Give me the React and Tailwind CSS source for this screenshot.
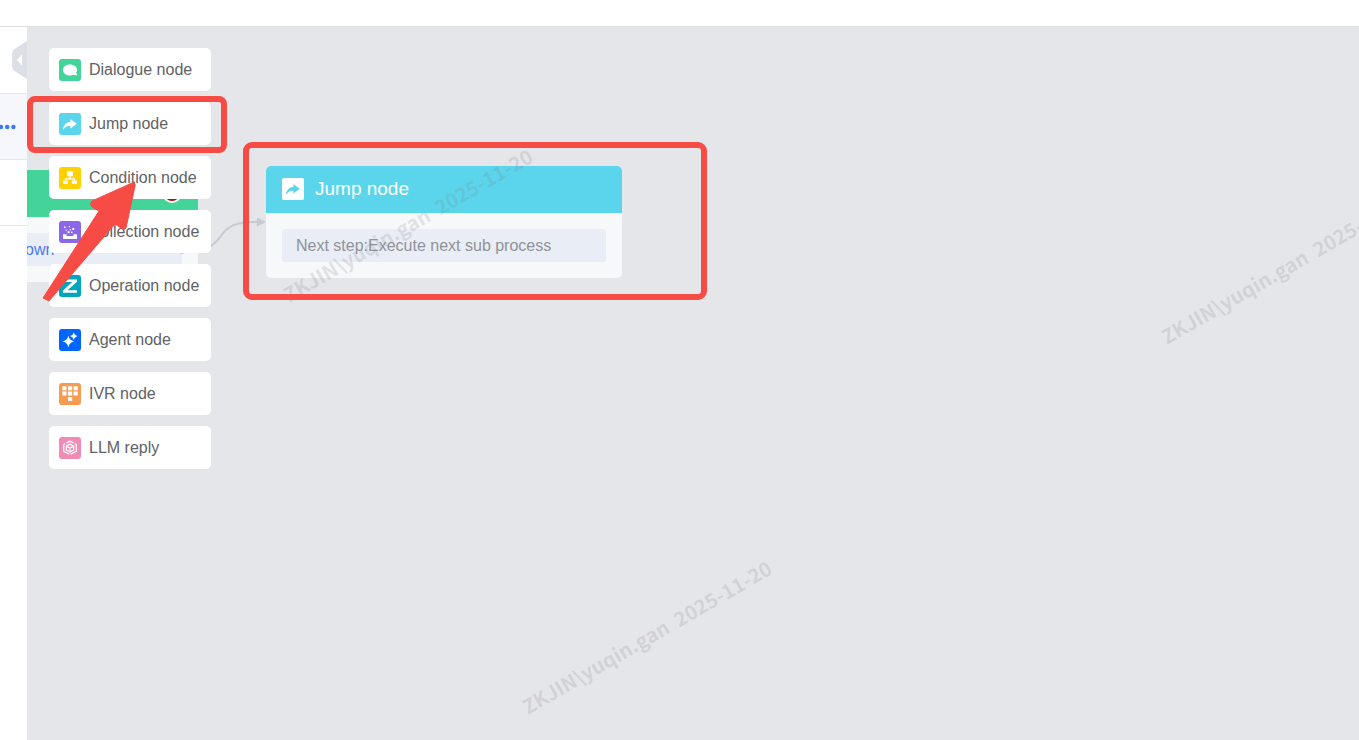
import React from "react";

const glyphs = {
  dialogue: (
    <path d="M11 5.5c4 0 7 2.300 7 5.400 0 1.200-.3 2-.8 2.800l1 2.700-3.400-.6c-1.100.4-2.400.6-3.800.6-4 0-7-2.300-7-5.500s3-5.400 7-5.400Z" />
  ),
  jump: (
    <path d="M11.400 6 17.800 10.700 11.400 15.400V12.700C8.400 12.600 6 13.800 4 16.700 4.400 12.200 7.200 9.200 11.400 8.800Z" />
  ),
  condition: (
    <>
      <rect x="8" y="4.300" width="6" height="5" rx="0.600" />
      <path d="M10.400 9h1.300v2.300h4.400v3h-1.300v-1.800H7.200v1.800H5.900v-3h4.500Z" />
      <rect x="4" y="13.600" width="5" height="3.200" />
      <rect x="12.800" y="13.600" width="5.200" height="3.200" />
    </>
  ),
  collection: (
    <>
      <path d="M4 13.300h3.600v1.700h6.800v-1.700H18V18H4Z" />
      <rect x="5" y="5.500" width="1.500" height="1.500" />
      <rect x="9.800" y="5" width="1.200" height="1.200" />
      <rect x="13.300" y="7" width="1.900" height="1.900" />
      <rect x="6.600" y="8.600" width="1.200" height="1.200" />
      <rect x="10.600" y="8" width="1.300" height="1.300" />
      <rect x="8.600" y="10.200" width="2" height="2" />
      <rect x="12" y="10.600" width="1.500" height="1.500" />
    </>
  ),
  operation: (
    <path d="M5 4.500h13v2.200L8.600 15.200H18v2.500H4v-2.300L13.200 7H5Z" />
  ),
  agent: (
    <>
      <path d="M9.400 6.600c.9 3.700 2.100 5 6 5.900-3.900.9-5.100 2.200-6 6-.9-3.800-2.100-5.100-6-6 3.900-.9 5.100-2.200 6-5.900Z" />
      <path d="M14.800 3.200c.8 2.300 1.500 3 3.900 3.900-2.400.9-3.100 1.600-3.900 3.900-.8-2.300-1.500-3-3.900-3.900 2.400-.9 3.100-1.600 3.900-3.900Z" />
    </>
  ),
  ivr: (
    <>
      <rect x="3.300" y="3.300" width="4.200" height="4" />
      <rect x="9" y="3.300" width="4.200" height="4" />
      <rect x="14.600" y="3.300" width="4.200" height="4" />
      <rect x="3.300" y="8.500" width="4.200" height="4" />
      <rect x="9" y="8.500" width="4.200" height="4" />
      <rect x="14.600" y="8.500" width="4.200" height="4" />
      <rect x="9" y="14" width="4.200" height="4" />
    </>
  ),
  llm: (
    <g fill="none" stroke="currentColor" strokeWidth="1.300" strokeLinejoin="round">
      <path d="m7.500 5.800 3.500-1.700 3.500 1.700M15.900 6.600l1.400.9v6.800L11.600 17.200M10.400 17.200 4.700 14.300V7.500l1.400-.9" />
      <path d="m11 7.200 3.600 1.800v4L11 15l-3.600-2V9ZM7.400 9l3.600 2 3.600-2M11 11v4" />
    </g>
  ),
};

const Glyph = ({ name }) => (
  <svg viewBox="0 0 22 22" className="size-full" fill="currentColor" aria-hidden="true">
    {glyphs[name]}
  </svg>
);

const palette = [
  { label: "Dialogue node", glyph: "dialogue", color: "bg-[#43d49a]" },
  { label: "Jump node", glyph: "jump", color: "bg-[#5ad5ec]" },
  { label: "Condition node", glyph: "condition", color: "bg-[#ffd100]" },
  { label: "Collection node", glyph: "collection", color: "bg-[#8b68e8]" },
  { label: "Operation node", glyph: "operation", color: "bg-[#00a6bc]" },
  { label: "Agent node", glyph: "agent", color: "bg-[#0066ff]" },
  { label: "IVR node", glyph: "ivr", color: "bg-[#f79b50]" },
  { label: "LLM reply", glyph: "llm", color: "bg-[#f18bb5]" },
];

function PaletteButton({ label, glyph, color }) {
  return (
    <button
      type="button"
      className="flex h-[43px] w-[162px] items-center gap-2 whitespace-nowrap rounded-[5px] bg-white pl-[10px] text-left text-[16px] leading-5 text-[#606266]"
    >
      <span className={`size-[22px] shrink-0 rounded-[3px] text-white ${color}`}>
        <Glyph name={glyph} />
      </span>
      {label}
    </button>
  );
}

function Watermark({ className }) {
  return (
    <span
      className={`pointer-events-none absolute origin-left -rotate-[30deg] whitespace-pre font-['Noto_Sans_CJK_SC',sans-serif] text-[20px] font-bold leading-6 text-[#808080]/20 ${className}`}
    >
      {"ZKJIN\\yuqin.gan  2025-11-20"}
    </span>
  );
}

function Sidebar() {
  return (
    <aside className="flex w-[27px] shrink-0 flex-col overflow-hidden bg-white">
      <div className="flex h-[67px] justify-end border-b border-[#e6e8ee] pt-[14px]">
        <button type="button" aria-label="Collapse panel" className="h-[38px] w-[15px]">
          <svg viewBox="0 0 15 38" className="size-full">
            <path d="M15 0v38L2.500 30Q0 28 0 25V13Q0 10 2.500 8Z" fill="#dcdfe6" />
            <path d="M10 13.500v11L5 19Z" fill="#fff" />
          </svg>
        </button>
      </div>
      <div className="flex h-[66px] items-center border-b border-[#e6e8ee] bg-[#f5f7fc]">
        <button type="button" aria-label="More" className="h-5 w-4">
          <svg viewBox="0 0 16 20" className="size-full" fill="#3f78ee">
            <circle cx="1" cy="10" r="2.200" />
            <circle cx="7.200" cy="10" r="2.200" />
            <circle cx="13.400" cy="10" r="2.200" />
          </svg>
        </button>
      </div>
      <div className="h-[66px] border-b border-[#e6e8ee]" />
    </aside>
  );
}

function SourceNode() {
  return (
    <article className="absolute left-0 top-[143px] w-[171px] rounded-r-[5px] bg-[#f7f8fa]">
      <header className="relative h-[47px] rounded-tr-[5px] bg-[#43d49a]">
        <span className="absolute right-4 top-[13px] size-5 rounded-full border-2 border-white bg-[#b80d0d]" />
      </header>
      <div className="py-4 pr-4">
        <p className="h-[33px] rounded-r-[3px] bg-[#e9edf6] -indent-[2px] text-[16px] leading-[34px] text-[#4a7df0]">own</p>
      </div>
    </article>
  );
}

function JumpNode() {
  return (
    <article className="absolute left-[239px] top-[139px] w-[356px] overflow-hidden rounded-[5px] bg-[#f7f8fa]">
      <header className="flex h-[47px] items-center gap-[11px] bg-[#5ad5ec] px-4 pb-0.5 text-[19px] leading-6 text-white">
        <span className="size-[22px] rounded-[2px] bg-white text-[#5ad5ec]">
          <Glyph name="jump" />
        </span>
        <h2>Jump node</h2>
      </header>
      <div className="p-4">
        <p className="h-[33px] rounded-[3px] bg-[#e9edf6] px-[14px] text-[16px] leading-[33px] text-[#909399]">
          Next step:Execute next sub process
        </p>
      </div>
    </article>
  );
}

export default function App() {
  return (
    <div className="flex min-h-screen flex-col bg-white font-['Liberation_Sans',Arial,sans-serif]">
      <header className="h-[27px] shrink-0 border-b border-[#dcdfe6] bg-white" />
      <div className="flex flex-1">
        <Sidebar />
        <main className="relative flex-1 overflow-hidden bg-[#e5e6ea]">
          <SourceNode />
          <JumpNode />
          <svg viewBox="0 0 90 44" className="absolute left-[150px] top-[185px] h-[44px] w-[90px]">
            <circle cx="5" cy="39" r="3" fill="#c8cad2" />
            <path d="M5 38C34 38 36 34 44 24C51 13 60 10 81 10" fill="none" stroke="#c8cad2" strokeWidth="2" />
            <path d="M80 5.500 89 10 80 14.500Z" fill="#c8cad2" />
          </svg>
          <nav aria-label="Node types" className="relative flex w-fit flex-col gap-[11px] pl-[22px] pt-[21px]">
            {palette.map((item) => (
              <PaletteButton key={item.label} {...item} />
            ))}
          </nav>
          <Watermark className="left-[258px] top-[257px]" />
          <Watermark className="left-[1136px] top-[299px]" />
          <Watermark className="left-[497px] top-[669px]" />
          <div className="absolute left-0 top-[69px] h-[57px] w-[200px] rounded-[8px] border-6 border-[#f74b46]" />
          <div className="absolute left-[216px] top-[115px] h-[158px] w-[464px] rounded-[9px] border-6 border-[#f74b46]" />
          <svg viewBox="0 0 96 124" className="absolute left-[14px] top-[154px] h-[124px] w-[96px]">
            <path
              d="M2 117 58 30 51 26Q48 23 51 20L91 2Q95 1 94 5L85 47Q83 50 80 47L74 43 8 120Z"
              fill="#f74b46"
              stroke="#f74b46"
              strokeLinejoin="round"
            />
          </svg>
        </main>
      </div>
    </div>
  );
}
